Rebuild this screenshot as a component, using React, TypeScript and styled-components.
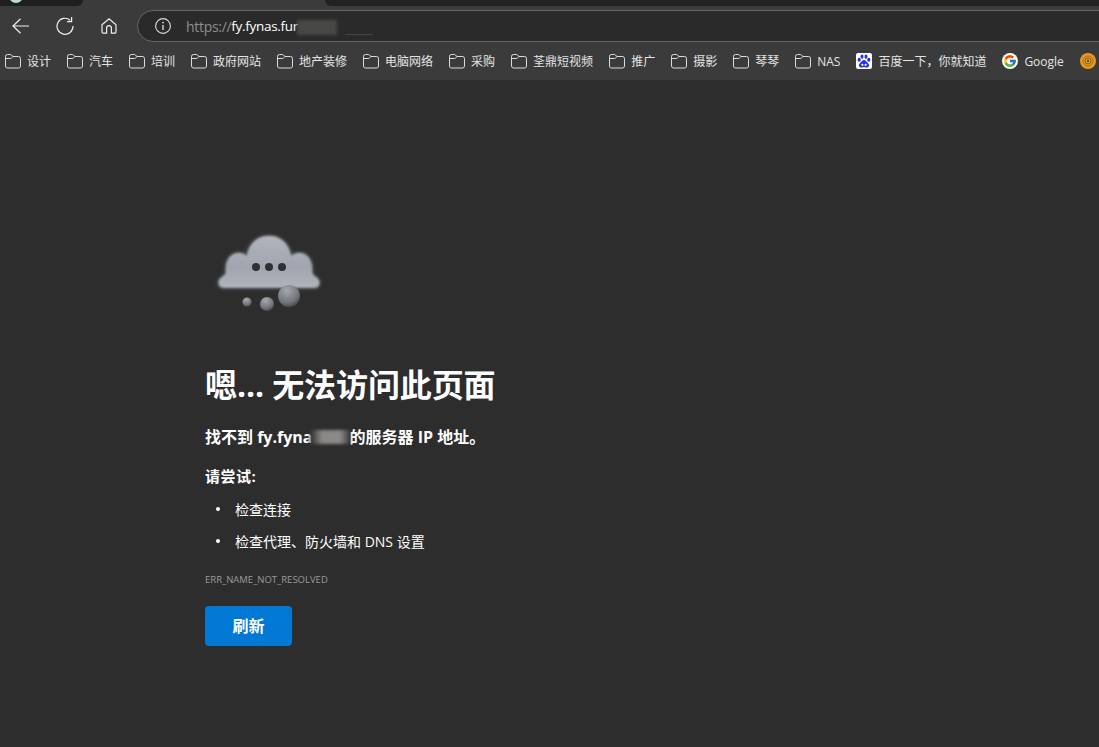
import React from 'react'
import styled, { createGlobalStyle } from 'styled-components'
import { FcGoogle } from 'react-icons/fc'

const GlobalStyle = createGlobalStyle`
  html, body {
    margin: 0;
    height: 100%;
    background: #2d2d2d;
  }
  body {
    font-family: 'Open Sans', 'Noto Sans CJK SC', sans-serif;
    overflow: hidden;
  }
`

const Window = styled.div`
  width: 1099px;
  height: 747px;
  display: flex;
  flex-direction: column;
  overflow: hidden;
`

const Chrome = styled.header`
  background: #3b3b3b;
  height: 80px;
  flex-shrink: 0;
  overflow: hidden;
`

const TabStrip = styled.div`
  display: flex;
  justify-content: space-between;
  height: 6px;
`

const ActiveTab = styled.div`
  width: 83px;
  background: #1f1f1f;
  border-bottom-right-radius: 7px;
  overflow: hidden;
  padding-left: 9px;
  box-sizing: border-box;
`

const TabFavicon = styled.div`
  width: 14px;
  height: 14px;
  margin-top: -11px;
  border-radius: 50%;
  background: #bcd8d4;
`

const OtherTab = styled.div`
  width: 774px;
  background: #222222;
  border-bottom-left-radius: 7px;
`

const Toolbar = styled.div`
  display: flex;
  align-items: center;
  height: 32px;
  margin-top: 4px;
  padding-left: 5px;
`

const NavButton = styled.div`
  width: 32px;
  height: 32px;
  margin-right: 12px;
  display: flex;
  align-items: center;
  justify-content: center;
  color: #eeeeee;
  flex-shrink: 0;
`

const AddressBar = styled.div`
  flex: 1;
  margin-right: -60px;
  height: 30px;
  display: flex;
  align-items: center;
  padding-left: 17px;
  background: #2a2a2a;
  border: 1px solid #666666;
  border-radius: 16px;
  color: #e6e6e6;
`

const UrlText = styled.div`
  display: flex;
  align-items: center;
  margin-left: 15px;
  white-space: nowrap;
`

const UrlScheme = styled.span`
  color: #8f8f8f;
  font-size: 14px;
  letter-spacing: -0.3px;
`

const UrlHost = styled.span`
  color: #ffffff;
  font-size: 13.5px;
  letter-spacing: -0.3px;
`

const UrlSmudge = styled.span`
  display: inline-block;
  width: 40px;
  height: 15px;
  margin: 2px 0 0 -1px;
  background: #484846;
  filter: blur(1.5px);
`

const UrlStain = styled.span`
  display: inline-block;
  width: 28px;
  height: 1px;
  margin: 16px 0 0 8px;
  background: #444444;
`

const Bookmarks = styled.nav`
  display: flex;
  align-items: center;
  gap: 16px;
  height: 30px;
  margin-top: 4px;
  padding-left: 5px;
`

const Bookmark = styled.div`
  display: flex;
  align-items: center;
  gap: 6px;
  flex-shrink: 0;
  font-size: 12px;
  color: #e4e4e4;
  white-space: nowrap;
`

const BaiduBadge = styled.div`
  width: 16px;
  height: 16px;
  border-radius: 2px;
  background: #ffffff;
  display: flex;
  align-items: center;
  justify-content: center;
`

const GoogleBadge = styled(BaiduBadge)`
  border-radius: 50%;
`

const Page = styled.main`
  flex: 1;
  padding: 149px 0 0 205px;
  color: #ffffff;
`

const CloudBox = styled.div`
  width: 116px;
  height: 92px;
  margin-left: 7px;
`

const Title = styled.h1`
  margin: 44px 0 0;
  font-size: 32px;
  line-height: 40px;
  font-weight: 700;
  letter-spacing: -0.1px;
`

const Subtitle = styled.p`
  margin: 21px 0 0;
  font-size: 16px;
  line-height: 22px;
  font-weight: 700;
  display: flex;
  align-items: center;
  white-space: pre;
`

const SubSmudge = styled.span`
  display: inline-block;
  width: 40px;
  height: 14px;
  margin-left: -3px;
  background: linear-gradient(90deg, #2d2d2d, #8b8886 30%, #8a8a8a 75%, #3d3d3d);
  filter: blur(1.5px);
`

const TryLabel = styled.p`
  margin: 18px 0 0;
  font-size: 15px;
  line-height: 20px;
  font-weight: 700;
  letter-spacing: 0.5px;
`

const Tips = styled.ul`
  margin: 13px 0 0;
  padding: 0;
  list-style: none;
`

const Tip = styled.li`
  display: flex;
  align-items: center;
  height: 20px;
  margin-bottom: 12px;
  font-size: 14px;
  &::before {
    content: '';
    width: 4px;
    height: 4px;
    margin: 0 15px 0 11px;
    border-radius: 50%;
    background: #ffffff;
  }
`

const ErrorCode = styled.div`
  margin-top: 22px;
  font-size: 9.5px;
  line-height: 14px;
  color: #9a9a9a;
`

const RefreshButton = styled.button`
  display: block;
  width: 87px;
  height: 40px;
  margin-top: 19px;
  padding: 0 0 2px;
  border: none;
  border-radius: 4px;
  background: #0078d4;
  color: #ffffff;
  font-family: inherit;
  font-size: 16px;
  font-weight: 700;
`

const BackIcon = () => (
  <svg width="18" height="16" viewBox="0 0 18 16" fill="none" stroke="currentColor" strokeWidth="1.2">
    <path d="M1 8h16M8.5 0.8L1 8l7.5 7.2" />
  </svg>
)

const ReloadIcon = () => (
  <svg width="18" height="18" viewBox="0 0 18 18" fill="none" stroke="currentColor" strokeWidth="1.2">
    <path d="M14.2 3.2A8 8 0 1 0 17 9" />
    <path d="M10 3.6h4.6V-1" transform="translate(1 1)" />
  </svg>
)

const HomeIcon = () => (
  <svg width="16" height="16" viewBox="0 0 16 16" fill="none" stroke="currentColor" strokeWidth="1.2">
    <path d="M1 6.8L8 .9l7 5.9V14a1.2 1.2 0 0 1-1.2 1.2H10.4V10a2.4 2.4 0 0 0-4.8 0v5.2H2.2A1.2 1.2 0 0 1 1 14z" />
  </svg>
)

const InfoIcon = () => (
  <svg width="16" height="16" viewBox="0 0 16 16" fill="none" stroke="#dddddd" strokeWidth="1.1">
    <circle cx="8" cy="8" r="7.4" />
    <path d="M8 7v5" strokeWidth="1.4" />
    <circle cx="8" cy="4.6" r="0.9" fill="#dddddd" stroke="none" />
  </svg>
)

const FolderIcon = () => (
  <svg width="16" height="16" viewBox="0 0 16 16" fill="none" stroke="#dcdcdc" strokeWidth="1">
    <path d="M.5 3.5A2 2 0 0 1 2.5 1.5h2.8c.5 0 .9.2 1.2.5L8 3.5h5.5a2 2 0 0 1 2 2v7.5a2 2 0 0 1-2 2h-11a2 2 0 0 1-2-2z" />
    <path d="M.8 5.5H5.2c.5 0 .9-.2 1.2-.5L8 3.5" />
  </svg>
)

const BaiduIcon = () => (
  <svg width="14" height="14" viewBox="0 0 14 14" fill="#2932e1">
    <ellipse cx="2.2" cy="5.8" rx="1.6" ry="2" />
    <ellipse cx="5" cy="2.7" rx="1.5" ry="2.1" />
    <ellipse cx="9" cy="2.7" rx="1.5" ry="2.1" />
    <ellipse cx="11.8" cy="5.8" rx="1.6" ry="2" />
    <path d="M7 6c-1.7 0-2.3 1.5-3.4 2.6C2.5 9.7 1.8 10.5 2 11.7 2.2 13 3.4 13.6 4.6 13.4 5.8 13.2 8.2 13.2 9.4 13.4 10.6 13.6 11.8 13 12 11.7 12.2 10.5 11.5 9.7 10.4 8.6 9.3 7.5 8.7 6 7 6z" />
    <circle cx="5.4" cy="10.8" r="1.1" fill="#ffffff" />
    <circle cx="8.6" cy="10.8" r="1.1" fill="#ffffff" />
  </svg>
)

const DiscIcon = () => (
  <svg width="16" height="16" viewBox="0 0 16 16">
    <circle cx="8" cy="8" r="8" fill="#ea9a1c" />
    <circle cx="8" cy="8" r="5" fill="none" stroke="#a8701c" strokeWidth="1" />
    <circle cx="8" cy="8" r="3" fill="none" stroke="#8a6020" strokeWidth="1" />
    <circle cx="8" cy="8" r="1.2" fill="#6d4d1e" />
  </svg>
)

const cloudPath =
  'M12 59C6 59 5 52 9 49 11 47 14 46 14 43 13 32 18 24 27 24 30 24 32 25 35 27 37 14 46 7 57 7 68 7 77 14 79 27 82 25 84 24 87 24 96 24 101 32 100 43 100 46 103 47 105 49 109 52 108 59 102 59Z'

const CloudIcon = () => (
  <svg width="116" height="92" viewBox="0 0 116 92">
    <defs>
      <linearGradient id="cloudFill" x1="0" y1="0" x2="0" y2="1">
        <stop offset="0" stopColor="#b2b5bc" />
        <stop offset="0.6" stopColor="#a0a5b0" />
        <stop offset="1" stopColor="#b0b4bc" />
      </linearGradient>
      <radialGradient id="ballFill" cx="0.4" cy="0.25" r="0.85">
        <stop offset="0" stopColor="#a6a9b0" />
        <stop offset="0.65" stopColor="#70737a" />
        <stop offset="1" stopColor="#3a3b3e" />
      </radialGradient>
      <filter id="glow" x="-20%" y="-20%" width="140%" height="140%">
        <feGaussianBlur stdDeviation="2.2" />
      </filter>
      <filter id="soft">
        <feGaussianBlur stdDeviation="0.9" />
      </filter>
    </defs>
    <path d={cloudPath} fill="#cdd0d6" filter="url(#glow)" opacity="0.5" />
    <path d="M10 61 8 54H105L103 61Z" fill="#33363b" filter="url(#soft)" />
    <path d={cloudPath} fill="url(#cloudFill)" filter="url(#soft)" />
    <circle cx="44" cy="38" r="4" fill="#2f3034" />
    <circle cx="57" cy="38" r="4" fill="#2f3034" />
    <circle cx="70" cy="38" r="4" fill="#2f3034" />
    <circle cx="35" cy="73" r="4.6" fill="url(#ballFill)" />
    <circle cx="55" cy="75" r="7" fill="url(#ballFill)" />
    <circle cx="77" cy="67" r="11" fill="url(#ballFill)" />
  </svg>
)

const folders = ['设计', '汽车', '培训', '政府网站', '地产装修', '电脑网络', '采购', '荃鼎短视频', '推广', '摄影', '琴琴', 'NAS']

export default function App() {
  return (
    <Window>
      <GlobalStyle />
      <Chrome>
        <TabStrip>
          <ActiveTab>
            <TabFavicon />
          </ActiveTab>
          <OtherTab />
        </TabStrip>
        <Toolbar>
          <NavButton>
            <BackIcon />
          </NavButton>
          <NavButton>
            <ReloadIcon />
          </NavButton>
          <NavButton>
            <HomeIcon />
          </NavButton>
          <AddressBar>
            <InfoIcon />
            <UrlText>
              <UrlScheme>https://</UrlScheme>
              <UrlHost>fy.fynas.fur</UrlHost>
              <UrlSmudge />
              <UrlStain />
            </UrlText>
          </AddressBar>
        </Toolbar>
        <Bookmarks>
          {folders.map((name) => (
            <Bookmark key={name}>
              <FolderIcon />
              {name}
            </Bookmark>
          ))}
          <Bookmark>
            <BaiduBadge>
              <BaiduIcon />
            </BaiduBadge>
            百度一下，你就知道
          </Bookmark>
          <Bookmark>
            <GoogleBadge>
              <FcGoogle size={14} />
            </GoogleBadge>
            Google
          </Bookmark>
          <Bookmark>
            <DiscIcon />
          </Bookmark>
        </Bookmarks>
      </Chrome>
      <Page>
        <CloudBox>
          <CloudIcon />
        </CloudBox>
        <Title>嗯... 无法访问此页面</Title>
        <Subtitle>
          找不到 fy.fyna
          <SubSmudge />
          的服务器 IP 地址。
        </Subtitle>
        <TryLabel>请尝试:</TryLabel>
        <Tips>
          <Tip>检查连接</Tip>
          <Tip>检查代理、防火墙和 DNS 设置</Tip>
        </Tips>
        <ErrorCode>ERR_NAME_NOT_RESOLVED</ErrorCode>
        <RefreshButton>刷新</RefreshButton>
      </Page>
    </Window>
  )
}
